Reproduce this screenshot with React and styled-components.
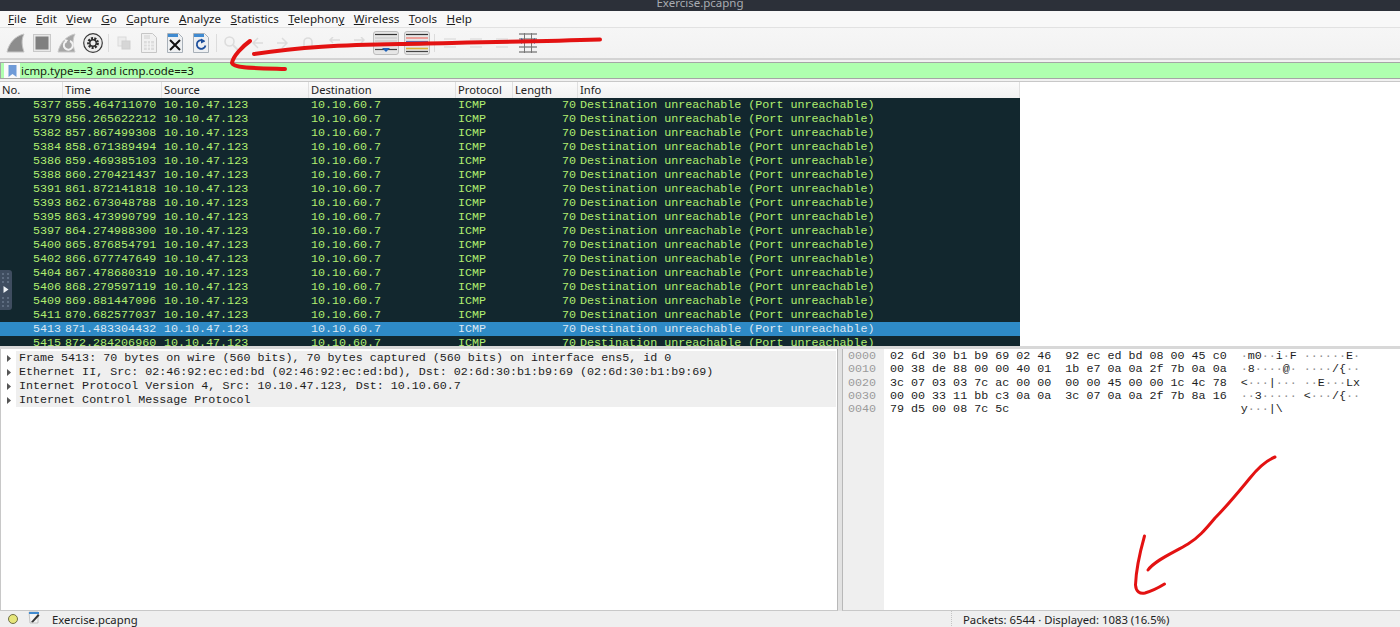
import React from "react";
import styled, { createGlobalStyle } from "styled-components";

const Global = createGlobalStyle`
  html, body { margin: 0; padding: 0; background: #fff; }
  #root { width: 1400px; height: 627px; overflow: hidden; }
`;

const UI = `"Noto Sans", "Open Sans", sans-serif`;
const MONO = `"Liberation Mono", monospace`;

const Page = styled.div`
  position: relative;
  width: 1400px;
  height: 627px;
  overflow: hidden;
  display: flex;
  flex-direction: column;
  background: #f2f2f2;
  font-family: ${UI};
  color: #1c1c1c;
`;
const TitleBar = styled.div`
  height: 11px;
  flex: none;
  overflow: hidden;
  background: #2c3039;
  color: #a9acb2;
  font-size: 11.5px;
  line-height: 6px;
  text-align: center;
`;
const MenuBar = styled.nav`
  height: 16px;
  flex: none;
  display: flex;
  align-items: center;
  padding-left: 8px;
  gap: 9.5px;
  background: #f8f8f8;
  border-bottom: 1px solid #e2e2e2;
  font-size: 11.6px;
  line-height: 16px;
`;
const MenuKey = styled.span`
  text-decoration: underline;
  text-underline-offset: 1px;
`;
const Toolbar = styled.div`
  height: 30px;
  flex: none;
  display: flex;
  align-items: center;
  padding-left: 3px;
  background: linear-gradient(#f6f6f6, #f2f2f2);
  border-bottom: 2px solid #d3d3d3;
`;
const Slot = styled.div`
  width: 25.7px;
  height: 26px;
  flex: none;
  display: flex;
  align-items: center;
  justify-content: center;
`;
const ToolSep = styled.div`
  width: 5px;
  flex: none;
  height: 18px;
  display: flex;
  justify-content: center;
  &::after { content: ""; width: 1px; background: #dcdcdc; }
`;
const Pressed = styled.div`
  width: 26px;
  height: 24px;
  flex: none;
  margin-right: ${(p) => p.$mr || 0}px;
  display: flex;
  align-items: center;
  justify-content: center;
  background: #e6e6e6;
  border: 1px solid #bdbdbd;
  border-radius: 3px;
  box-sizing: border-box;
`;
const ToolGap = styled.div`
  width: ${(p) => p.$w}px;
  flex: none;
`;
const FilterRow = styled.div`
  height: 22px;
  flex: none;
  box-sizing: border-box;
  padding: 2px 0 2px 0;
  background: #f1f1f1;
  border-bottom: 1px solid #c8c8c8;
`;
const FilterBox = styled.div`
  height: 17px;
  display: flex;
  align-items: stretch;
  background: #afffaf;
  border: 1px solid #a5a5a5;
  border-right: 0;
  box-sizing: border-box;
`;
const BookmarkButton = styled.div`
  width: 16px;
  flex: none;
  background: #fafafa;
  display: flex;
  align-items: center;
  justify-content: center;
  margin-left: 3px;
`;
const FilterText = styled.div`
  padding-left: 1px;
  font-size: 11.4px;
  line-height: 15px;
  color: #16220f;
`;
const PacketList = styled.section`
  height: 264px;
  flex: none;
  overflow: hidden;
  background: #fff;
  border-bottom: 3px solid #d8d8d8;
`;
const HeaderRow = styled.div`
  height: 16px;
  width: 1020px;
  display: grid;
  grid-template-columns: 63px 99px 147px 147px 57px 65px 442px;
  background: #f4f4f4;
  border-bottom: 0;
`;
const HeaderCell = styled.div`
  padding-left: 2px;
  font-size: 11.2px;
  line-height: 15px;
  border-right: 1px solid #e0e0e0;
  background: linear-gradient(#fbfbfb, #f1f1f1);
  color: #222;
`;
const Row = styled.div`
  height: 14px;
  width: 1020px;
  display: grid;
  grid-template-columns: 63px 99px 147px 147px 57px 65px 442px;
  background: ${(p) => (p.$selected ? "#2e8ac6" : "#12272e")};
  color: ${(p) => (p.$selected ? "#dce8f3" : "#b0ee70")};
  font-family: ${MONO};
  font-size: 11.7px;
  line-height: 14px;
  white-space: pre;
`;
const Cell = styled.div`
  padding-left: ${(p) => (p.$right ? 0 : 2)}px;
  padding-right: ${(p) => (p.$right ? 2 : 0)}px;
  text-align: ${(p) => (p.$right ? "right" : "left")};
  overflow: hidden;
`;
const Panes = styled.div`
  flex: 1;
  min-height: 0;
  display: flex;
  gap: 4px;
  background: #e2e2e2;
`;
const DetailPane = styled.section`
  width: 838px;
  flex: none;
  box-sizing: border-box;
  background: #fff;
  border-right: 1px solid #b8b8b8;
  border-bottom: 1px solid #c8c8c8;
  border-left: 1px solid #c8c8c8;
  padding-top: 2px;
  font-family: ${MONO};
  font-size: 11.7px;
  line-height: 14px;
`;
const TreeRow = styled.div`
  height: 14px;
  display: flex;
  align-items: center;
  white-space: pre;
  color: #1d1d1d;
`;
const Twisty = styled.div`
  width: 15px;
  flex: none;
  display: flex;
  justify-content: center;
  padding-left: 0;
`;
const TreeText = styled.div`
  flex: 1;
  background: #efefef;
  padding-left: 3px;
  height: 14px;
  margin-right: 1px;
`;
const HexPane = styled.section`
  flex: 1;
  display: flex;
  box-sizing: border-box;
  background: #fff;
  border-left: 1px solid #b8b8b8;
  border-bottom: 1px solid #c8c8c8;
  font-family: ${MONO};
  font-size: 11.7px;
  line-height: 13.3px;
  white-space: pre;
`;
const Gutter = styled.div`
  width: 41px;
  flex: none;
  background: #efefef;
  color: #9b9b9b;
  padding: 1px 0 0 5px;
  box-sizing: border-box;
`;
const HexBody = styled.div`
  padding: 1px 0 0 6px;
  color: #1d1d1d;
`;
const Faint = styled.span`
  color: #8f8f8f;
`;
const StatusBar = styled.footer`
  height: 16px;
  flex: none;
  display: flex;
  align-items: center;
  background: #efefef;
  font-size: 11.3px;
  line-height: 16px;
  color: #222;
  overflow: hidden;
`;
const Led = styled.div`
  width: 10px;
  height: 10px;
  margin-left: 8px;
  border-radius: 50%;
  background: #e6e67a;
  border: 1px solid #6f6f45;
  box-sizing: border-box;
  flex: none;
`;
const StatusFile = styled.div`
  margin-left: 10px;
  width: 923px;
  flex: none;
  padding-top: 1px;
`;
const StatusName = styled.span`
  margin-left: 11px;
`;
const StatusPackets = styled.div`
  border-left: 1px dotted #c4c4c4;
  padding-left: 11px;
  padding-top: 1px;
`;
const Grip = styled.div`
  position: absolute;
  left: 0;
  top: 270px;
  width: 12px;
  height: 40px;
  background: #3f4d60;
  border-radius: 0 3px 3px 0;
  display: flex;
  align-items: center;
  justify-content: center;
`;
const Scribble = styled.svg`
  position: absolute;
  left: 0;
  top: 0;
  pointer-events: none;
`;

const Fin = ({ fill = "#8d8d8d" }) => (
  <svg width="20" height="20" viewBox="0 0 20 20">
    <path d="M1 19C3 10 9 3 18 1c-3 6-2 12 0 18z" fill={fill} stroke="#c4c4c4" />
  </svg>
);
const Stop = () => (
  <svg width="18" height="18" viewBox="0 0 18 18">
    <rect x=".5" y=".5" width="17" height="17" fill="#e8e8e8" stroke="#c9c9c9" />
    <rect x="2.5" y="2.5" width="13" height="13" fill="#7f7f7f" />
  </svg>
);
const Restart = () => (
  <svg width="20" height="20" viewBox="0 0 20 20">
    <path d="M1 19C3 10 9 3 18 1c-3 6-2 12 0 18z" fill="#a6a6a6" stroke="#c8c8c8" />
    <path d="M13 8a4.5 4.5 0 1 1-4 .3" fill="none" stroke="#f2f2f2" strokeWidth="2" />
    <path d="M7 6l4 1-2 3z" fill="#f2f2f2" />
  </svg>
);
const Gear = () => (
  <svg width="20" height="20" viewBox="0 0 20 20">
    <circle cx="10" cy="10" r="9.3" fill="#ededed" stroke="#3a3a3a" strokeWidth="1.2" />
    <circle cx="10" cy="10" r="4.6" fill="none" stroke="#2b2b2b" strokeWidth="2.6" strokeDasharray="2 1.2" />
    <circle cx="10" cy="10" r="3.2" fill="none" stroke="#2b2b2b" strokeWidth="1.4" />
  </svg>
);
const Copy = () => (
  <svg width="14" height="14" viewBox="0 0 14 14">
    <rect x="1" y="1" width="8" height="9" fill="#ececec" stroke="#dadada" />
    <rect x="5" y="5" width="8" height="8" fill="#d6d6d6" stroke="#cfcfcf" />
  </svg>
);
const FileGrid = () => (
  <svg width="16" height="20" viewBox="0 0 16 20">
    <path d="M.5.5h11l4 4v15H.5z" fill="#f1f1f1" stroke="#c6c6c6" />
    <path d="M3 8h10v9H3z" fill="#dcdcdc" />
    <path d="M3 11h10M3 14h10M6.3 8v9M9.6 8v9" stroke="#f5f5f5" />
    <path d="M3 3h6M3 5h6" stroke="#d0d0d0" />
  </svg>
);
const FileClose = () => (
  <svg width="16" height="20" viewBox="0 0 16 20">
    <path d="M.5.5h11l4 4v15H.5z" fill="#eef0f2" stroke="#a8b0b8" />
    <path d="M1 1h10v3H1z" fill="#3f8ad0" />
    <path d="M3 7l10 10M13 7L3 17" stroke="#111" strokeWidth="2" />
  </svg>
);
const FileReload = () => (
  <svg width="16" height="20" viewBox="0 0 16 20">
    <path d="M.5.5h11l4 4v15H.5z" fill="#eef0f2" stroke="#a8b0b8" />
    <path d="M1 1h10v3H1z" fill="#3f8ad0" />
    <path d="M11.5 8.5a4.4 4.4 0 1 0 1 4" fill="none" stroke="#1d4f9c" strokeWidth="1.8" />
    <path d="M8 5.5l4 3-4 2z" fill="#1d4f9c" />
  </svg>
);
const Search = () => (
  <svg width="16" height="16" viewBox="0 0 16 16" fill="none" stroke="#dcdcdc" strokeWidth="1.6">
    <circle cx="6.5" cy="6.5" r="4.5" />
    <path d="M10 10l5 5" strokeWidth="2" />
  </svg>
);
const Arrow = ({ flip }) => (
  <svg width="13" height="12" viewBox="0 0 13 12" fill="none" stroke="#dcdcdc" strokeWidth="1.5">
    <path d={flip ? "M12 6H2M7 1L2 6l5 5" : "M1 6h10M6 1l5 5-5 5"} />
  </svg>
);
const Jump = () => (
  <svg width="12" height="14" viewBox="0 0 12 14" fill="none" stroke="#dcdcdc" strokeWidth="1.6">
    <path d="M2 13V6a4 4 0 0 1 8 0v7" />
  </svg>
);
const DoubleArrow = ({ flip }) => (
  <svg width="14" height="12" viewBox="0 0 14 12" fill="none" stroke="#dcdcdc" strokeWidth="1.5">
    <path d={flip ? "M13 3H3M6 0L3 3l3 3M13 9H7" : "M1 3h10M8 0l3 3-3 3M1 9h6"} />
  </svg>
);
const AutoScroll = () => (
  <svg width="22" height="20" viewBox="0 0 22 20">
    <path d="M0 1.5h22" stroke="#333" strokeWidth="1.2" />
    <path d="M0 5h22M0 8h22M0 11h22" stroke="#c4c4c4" />
    <path d="M0 16.5h22" stroke="#444" strokeWidth="1.2" />
    <path d="M7 15h8l-4 4z" fill="#1f62b8" />
  </svg>
);
const Colorize = () => (
  <svg width="22" height="20" viewBox="0 0 22 20">
    <path d="M0 1.5h22" stroke="#333" strokeWidth="1.2" />
    <path d="M0 5h22" stroke="#ef8d86" strokeWidth="1.6" />
    <path d="M0 8.5h22" stroke="#5670b8" strokeWidth="1.2" />
    <path d="M0 12h22" stroke="#c4c4c4" />
    <path d="M0 15.5h22" stroke="#d9b23c" strokeWidth="1.6" />
    <path d="M0 18.5h22" stroke="#444" strokeWidth="1.2" />
  </svg>
);
const ZoomBox = () => (
  <svg width="12" height="10" viewBox="0 0 12 10">
    <path d="M0 1h12M0 5h12M0 9h12" stroke="#e0e0e0" strokeWidth="1.4" />
  </svg>
);
const Resize = () => (
  <svg width="18" height="20" viewBox="0 0 18 20">
    <path d="M0 1h18M0 6h18M0 14h18M0 19h18" stroke="#555" />
    <path d="M5.5 0v20M12.5 0v20" stroke="#777" />
    <path d="M2 5l3.5 3L2 11zM16 5l-3.500 3L16 11z" fill="#1f62b8" />
  </svg>
);
const Bookmark = () => (
  <svg width="9" height="12" viewBox="0 0 9 12">
    <path d="M.5 0h8v12L4.500 9 .5 12z" fill="#6f9bd8" />
  </svg>
);
const Caret = () => (
  <svg width="4" height="7" viewBox="0 0 4 7">
    <path d="M0 0l4 3.500L0 7z" fill="#555" />
  </svg>
);
const EditIcon = () => (
  <svg width="13" height="13" viewBox="0 0 13 13">
    <path d="M1 1h9v11H2z" fill="#f3f3f3" stroke="#b0b0b0" strokeWidth=".7" />
    <path d="M1 1h10v2H1z" fill="#3f8ad0" />
    <path d="M3 11l7-8 1.500 1.500-6.500 7z" fill="#333" />
  </svg>
);
const GripDots = () => (
  <svg width="10" height="34" viewBox="0 0 10 34">
    <g fill="#5d6c80">
      {[0, 4, 8, 24, 28, 32].map((y) => (
        <g key={y}>
          <rect x="1" y={y} width="2" height="2" />
          <rect x="6" y={y} width="2" height="2" />
        </g>
      ))}
    </g>
    <path d="M2.500 13l5 3.500-5 3.500z" fill="#eef2f6" />
  </svg>
);

const menus = [
  ["F", "ile"], ["E", "dit"], ["V", "iew"], ["G", "o"], ["C", "apture"], ["A", "nalyze"],
  ["S", "tatistics"], ["T", "elephon", "y"], ["W", "ireless"], ["T", "ools"], ["H", "elp"],
];

const packets = [
  ["5377", "855.464711070"], ["5379", "856.265622212"], ["5382", "857.867499308"],
  ["5384", "858.671389494"], ["5386", "859.469385103"], ["5388", "860.270421437"],
  ["5391", "861.872141818"], ["5393", "862.673048788"], ["5395", "863.473990799"],
  ["5397", "864.274988300"], ["5400", "865.876854791"], ["5402", "866.677747649"],
  ["5404", "867.478680319"], ["5406", "868.279597119"], ["5409", "869.881447096"],
  ["5411", "870.682577037"], ["5413", "871.483304432"], ["5415", "872.284206960"],
];

const columns = ["No.", "Time", "Source", "Destination", "Protocol", "Length", "Info"];

const tree = [
  "Frame 5413: 70 bytes on wire (560 bits), 70 bytes captured (560 bits) on interface ens5, id 0",
  "Ethernet II, Src: 02:46:92:ec:ed:bd (02:46:92:ec:ed:bd), Dst: 02:6d:30:b1:b9:69 (02:6d:30:b1:b9:69)",
  "Internet Protocol Version 4, Src: 10.10.47.123, Dst: 10.10.60.7",
  "Internet Control Message Protocol",
];

const hex = [
  ["0000", "02 6d 30 b1 b9 69 02 46  92 ec ed bd 08 00 45 c0", "·m0··i·F ······E·"],
  ["0010", "00 38 de 88 00 00 40 01  1b e7 0a 0a 2f 7b 0a 0a", "·8····@· ····/{··"],
  ["0020", "3c 07 03 03 7c ac 00 00  00 00 45 00 00 1c 4c 78", "<···|··· ··E···Lx"],
  ["0030", "00 00 33 11 bb c3 0a 0a  3c 07 0a 0a 2f 7b 8a 16", "··3····· <···/{··"],
  ["0040", "79 d5 00 08 7c 5c", "y···|\\"],
];

const Ascii = ({ text }) => (
  <>
    {text.split(/(·+)/).map((part, i) =>
      part.startsWith("·") ? <Faint key={i}>{part}</Faint> : <React.Fragment key={i}>{part}</React.Fragment>
    )}
  </>
);

export default function App() {
  return (
    <Page>
      <Global />
      <TitleBar>Exercise.pcapng</TitleBar>
      <MenuBar>
        {menus.map(([k, rest, tail], i) => (
          <span key={i}>
            <MenuKey>{k}</MenuKey>
            {rest}
            {tail && <MenuKey>{tail}</MenuKey>}
          </span>
        ))}
      </MenuBar>
      <Toolbar>
        <Slot><Fin /></Slot>
        <Slot><Stop /></Slot>
        <Slot><Restart /></Slot>
        <Slot><Gear /></Slot>
        <ToolSep />
        <Slot><Copy /></Slot>
        <Slot><FileGrid /></Slot>
        <Slot><FileClose /></Slot>
        <Slot><FileReload /></Slot>
        <ToolSep />
        <Slot><Search /></Slot>
        <Slot><Arrow flip /></Slot>
        <Slot><Arrow /></Slot>
        <Slot><Jump /></Slot>
        <Slot><DoubleArrow flip /></Slot>
        <Slot><DoubleArrow /></Slot>
        <Pressed $mr={5}><AutoScroll /></Pressed>
        <Pressed><Colorize /></Pressed>
        <ToolGap $w={2} />
        <ToolSep />
        <ToolGap $w={1} />
        <Slot><ZoomBox /></Slot>
        <Slot><ZoomBox /></Slot>
        <Slot><ZoomBox /></Slot>
        <Slot><Resize /></Slot>
      </Toolbar>
      <FilterRow>
        <FilterBox>
          <BookmarkButton><Bookmark /></BookmarkButton>
          <FilterText>icmp.type==3 and icmp.code==3</FilterText>
        </FilterBox>
      </FilterRow>
      <PacketList>
        <HeaderRow>
          {columns.map((c) => (
            <HeaderCell key={c}>{c}</HeaderCell>
          ))}
        </HeaderRow>
        {packets.map(([no, time]) => (
          <Row key={no} $selected={no === "5413"}>
            <Cell $right>{no}</Cell>
            <Cell>{time}</Cell>
            <Cell>10.10.47.123</Cell>
            <Cell>10.10.60.7</Cell>
            <Cell>ICMP</Cell>
            <Cell $right>70</Cell>
            <Cell>Destination unreachable (Port unreachable)</Cell>
          </Row>
        ))}
      </PacketList>
      <Panes>
        <DetailPane>
          {tree.map((t) => (
            <TreeRow key={t}>
              <Twisty><Caret /></Twisty>
              <TreeText>{t}</TreeText>
            </TreeRow>
          ))}
        </DetailPane>
        <HexPane>
          <Gutter>
            {hex.map(([o]) => (
              <div key={o}>{o}</div>
            ))}
          </Gutter>
          <HexBody>
            {hex.map(([o, h, a]) => (
              <div key={o}>
                {h.padEnd(50, " ")}
                <Ascii text={a} />
              </div>
            ))}
          </HexBody>
        </HexPane>
      </Panes>
      <StatusBar>
        <Led />
        <StatusFile>
          <EditIcon />
          <StatusName>Exercise.pcapng</StatusName>
        </StatusFile>
        <StatusPackets>Packets: 6544 · Displayed: 1083 (16.5%)</StatusPackets>
      </StatusBar>
      <Grip><GripDots /></Grip>
      <Scribble width="1400" height="627" viewBox="0 0 1400 627" fill="none" stroke="#e31212" strokeLinecap="round" strokeLinejoin="round">
        <path d="M600 39.500C520 42 440 43 400 44 340 45 300 47 254 54" strokeWidth="4" />
        <path d="M250 41C243 46 233 56 232 63 234 68 250 68 285 69" strokeWidth="4" />
        <path d="M1275 457C1265 461 1258 468 1250 478 1240 490 1228 505 1215 518 1205 530 1198 538 1188 544 1175 552 1155 560 1148 570" strokeWidth="3" />
        <path d="M1144.500 536C1140 552 1136 570 1135.500 585 1136 592 1140 594 1145 593 1152 591 1158 588 1164.500 584" strokeWidth="3" />
      </Scribble>
    </Page>
  );
}
